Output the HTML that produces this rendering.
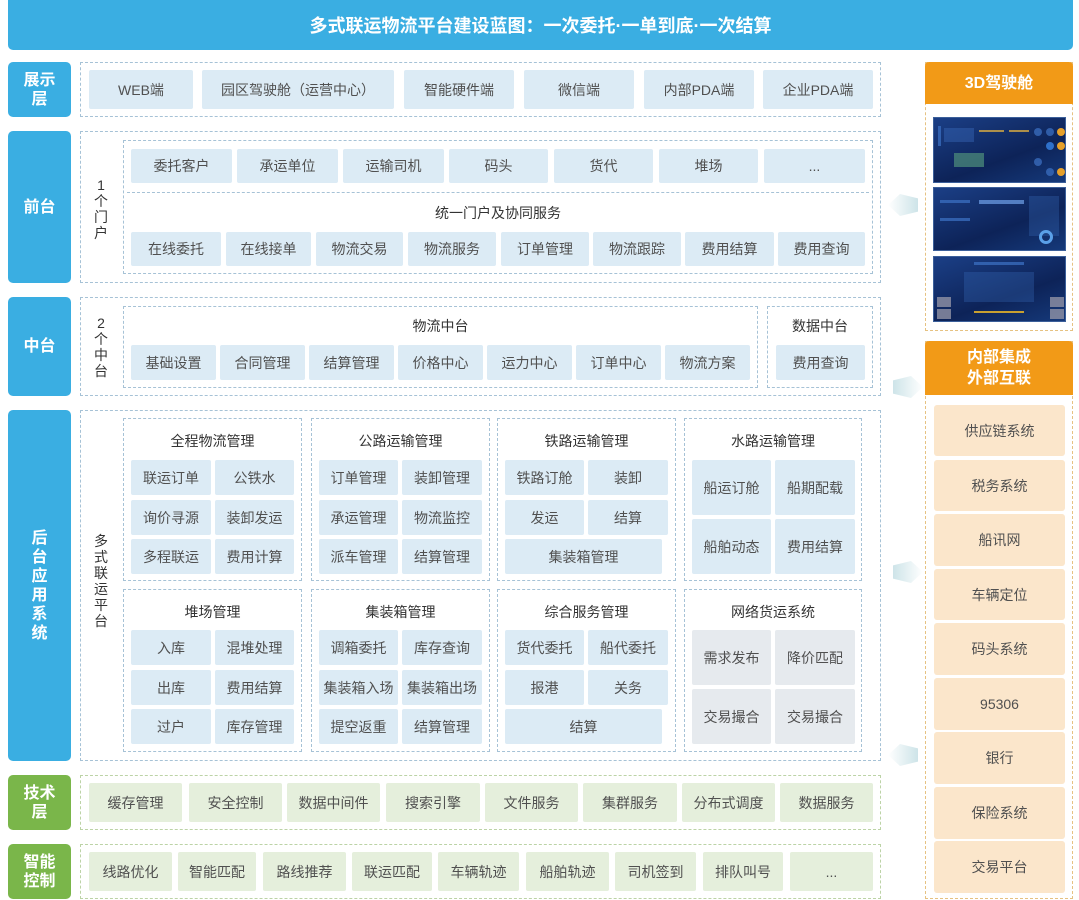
<!DOCTYPE html>
<html><head><meta charset="utf-8"><style>
*{margin:0;padding:0;box-sizing:border-box}
body{width:1079px;height:900px;background:#fff;position:relative;overflow:hidden;font-family:"Liberation Sans","Noto Sans CJK SC",sans-serif;color:#505050;font-size:14px}
.a{position:absolute;display:flex;align-items:center;justify-content:center;text-align:center}
.i{background:#dcebf5;border-radius:2px}
.g{background:#e5efdc;border-radius:2px}
.o{background:#fbe6cb;border-radius:3px}
.y{background:#e6eaee;border-radius:2px}
.L{background:#3aaee2;color:#fff;font-weight:bold;font-size:16px;border-radius:5px;line-height:19px}
.G{background:#7ab64a;color:#fff;font-weight:bold;font-size:16px;border-radius:5px;line-height:19px}
.O{background:#f29a17;color:#fff;font-weight:bold;font-size:16px;border-radius:4px 4px 0 0;line-height:21px}
.d{position:absolute;border:1px dashed #a6c2d6}
.dg{position:absolute;border:1px dashed #bcd3a6}
.do{position:absolute;border:1px dashed #e6c282}
.t{position:absolute;text-align:center;font-size:14px;color:#333}
.v{position:absolute;width:16px;font-size:14px;line-height:16px;text-align:center;color:#333}
.ar{position:absolute;width:30px;height:22px;background:linear-gradient(90deg,rgba(200,225,230,.0),rgba(200,225,230,.9));clip-path:polygon(0 50%,40% 0,100% 20%,100% 80%,40% 100%)}
.ar.r{clip-path:polygon(100% 50%,60% 0,0 20%,0 80%,60% 100%);background:linear-gradient(90deg,rgba(200,225,230,.9),rgba(200,225,230,0))}
.s{position:absolute;left:933px;width:133px;background:linear-gradient(160deg,#1b3f86,#0d2358 60%,#15397a);border:1px solid #3b5f9a;overflow:hidden}
.s i{position:absolute;background:#3b6fc0;opacity:.75}
</style></head><body>
<div class="a" style="left:8px;top:0;width:1065px;height:50px;background:#3aaee2;color:#fff;font-weight:bold;font-size:18px;border-radius:0 0 5px 5px">多式联运物流平台建设蓝图：一次委托·一单到底·一次结算</div>

<div class="a L" style="left:8px;top:62px;width:63px;height:55px">展示<br>层</div>
<div class="a L" style="left:8px;top:131px;width:63px;height:152px">前台</div>
<div class="a L" style="left:8px;top:297px;width:63px;height:99px">中台</div>
<div class="a L" style="left:8px;top:410px;width:63px;height:351px;padding:0 23px;line-height:19px">后台应用系统</div>
<div class="a G" style="left:8px;top:775px;width:63px;height:55px">技术<br>层</div>
<div class="a G" style="left:8px;top:844px;width:63px;height:55px">智能<br>控制</div>

<div class="d" style="left:80px;top:62px;width:801px;height:55px"></div>
<div class="a i" style="left:89px;top:70px;width:104px;height:39px">WEB端</div>
<div class="a i" style="left:202px;top:70px;width:192px;height:39px">园区驾驶舱（运营中心）</div>
<div class="a i" style="left:404px;top:70px;width:110px;height:39px">智能硬件端</div>
<div class="a i" style="left:524px;top:70px;width:110px;height:39px">微信端</div>
<div class="a i" style="left:644px;top:70px;width:110px;height:39px">内部PDA端</div>
<div class="a i" style="left:763px;top:70px;width:110px;height:39px">企业PDA端</div>

<div class="d" style="left:80px;top:131px;width:801px;height:152px"></div>
<div class="v" style="left:93px;top:177px">1个门户</div>
<div class="d" style="left:123px;top:140px;width:750px;height:134px"></div>
<div class="a i" style="left:131px;top:149px;width:101px;height:34px">委托客户</div>
<div class="a i" style="left:237px;top:149px;width:101px;height:34px">承运单位</div>
<div class="a i" style="left:343px;top:149px;width:101px;height:34px">运输司机</div>
<div class="a i" style="left:449px;top:149px;width:99px;height:34px">码头</div>
<div class="a i" style="left:554px;top:149px;width:99px;height:34px">货代</div>
<div class="a i" style="left:659px;top:149px;width:99px;height:34px">堆场</div>
<div class="a i" style="left:764px;top:149px;width:101px;height:34px">...</div>
<div style="position:absolute;left:127px;top:192px;width:742px;border-top:1px dashed #a6c2d6"></div>
<div class="t" style="left:123px;top:203px;width:750px">统一门户及协同服务</div>
<div class="a i" style="left:131px;top:232px;width:90px;height:34px">在线委托</div>
<div class="a i" style="left:226px;top:232px;width:85px;height:34px">在线接单</div>
<div class="a i" style="left:316px;top:232px;width:87px;height:34px">物流交易</div>
<div class="a i" style="left:408px;top:232px;width:88px;height:34px">物流服务</div>
<div class="a i" style="left:501px;top:232px;width:88px;height:34px">订单管理</div>
<div class="a i" style="left:593px;top:232px;width:88px;height:34px">物流跟踪</div>
<div class="a i" style="left:685px;top:232px;width:89px;height:34px">费用结算</div>
<div class="a i" style="left:778px;top:232px;width:87px;height:34px">费用查询</div>

<div class="d" style="left:80px;top:297px;width:801px;height:99px"></div>
<div class="v" style="left:93px;top:315px">2个中台</div>
<div class="d" style="left:123px;top:306px;width:635px;height:82px"></div>
<div class="t" style="left:123px;top:316px;width:635px">物流中台</div>
<div class="a i" style="left:131px;top:345px;width:85px;height:35px">基础设置</div>
<div class="a i" style="left:220px;top:345px;width:85px;height:35px">合同管理</div>
<div class="a i" style="left:309px;top:345px;width:85px;height:35px">结算管理</div>
<div class="a i" style="left:398px;top:345px;width:85px;height:35px">价格中心</div>
<div class="a i" style="left:487px;top:345px;width:85px;height:35px">运力中心</div>
<div class="a i" style="left:576px;top:345px;width:85px;height:35px">订单中心</div>
<div class="a i" style="left:665px;top:345px;width:85px;height:35px">物流方案</div>
<div class="d" style="left:767px;top:306px;width:106px;height:82px"></div>
<div class="t" style="left:767px;top:316px;width:106px">数据中台</div>
<div class="a i" style="left:776px;top:345px;width:89px;height:35px">费用查询</div>

<div class="d" style="left:80px;top:410px;width:801px;height:351px"></div>
<div class="v" style="left:93px;top:533px">多式联运平台</div>

<div class="d" style="left:123px;top:418px;width:179px;height:163px"></div>
<div class="t" style="left:123px;top:431px;width:179px">全程物流管理</div>
<div class="a i" style="left:131px;top:460px;width:80px;height:35px">联运订单</div>
<div class="a i" style="left:215px;top:460px;width:79px;height:35px">公铁水</div>
<div class="a i" style="left:131px;top:500px;width:80px;height:35px">询价寻源</div>
<div class="a i" style="left:215px;top:500px;width:79px;height:35px">装卸发运</div>
<div class="a i" style="left:131px;top:539px;width:80px;height:35px">多程联运</div>
<div class="a i" style="left:215px;top:539px;width:79px;height:35px">费用计算</div>

<div class="d" style="left:311px;top:418px;width:179px;height:163px"></div>
<div class="t" style="left:311px;top:431px;width:179px">公路运输管理</div>
<div class="a i" style="left:319px;top:460px;width:79px;height:35px">订单管理</div>
<div class="a i" style="left:402px;top:460px;width:80px;height:35px">装卸管理</div>
<div class="a i" style="left:319px;top:500px;width:79px;height:35px">承运管理</div>
<div class="a i" style="left:402px;top:500px;width:80px;height:35px">物流监控</div>
<div class="a i" style="left:319px;top:539px;width:79px;height:35px">派车管理</div>
<div class="a i" style="left:402px;top:539px;width:80px;height:35px">结算管理</div>

<div class="d" style="left:497px;top:418px;width:179px;height:163px"></div>
<div class="t" style="left:497px;top:431px;width:179px">铁路运输管理</div>
<div class="a i" style="left:505px;top:460px;width:79px;height:35px">铁路订舱</div>
<div class="a i" style="left:588px;top:460px;width:80px;height:35px">装卸</div>
<div class="a i" style="left:505px;top:500px;width:79px;height:35px">发运</div>
<div class="a i" style="left:588px;top:500px;width:80px;height:35px">结算</div>
<div class="a i" style="left:505px;top:539px;width:157px;height:35px">集装箱管理</div>

<div class="d" style="left:684px;top:418px;width:178px;height:163px"></div>
<div class="t" style="left:684px;top:431px;width:178px">水路运输管理</div>
<div class="a i" style="left:692px;top:460px;width:79px;height:55px">船运订舱</div>
<div class="a i" style="left:775px;top:460px;width:80px;height:55px">船期配载</div>
<div class="a i" style="left:692px;top:519px;width:79px;height:55px">船舶动态</div>
<div class="a i" style="left:775px;top:519px;width:80px;height:55px">费用结算</div>

<div class="d" style="left:123px;top:589px;width:179px;height:163px"></div>
<div class="t" style="left:123px;top:602px;width:179px">堆场管理</div>
<div class="a i" style="left:131px;top:630px;width:80px;height:35px">入库</div>
<div class="a i" style="left:215px;top:630px;width:79px;height:35px">混堆处理</div>
<div class="a i" style="left:131px;top:670px;width:80px;height:35px">出库</div>
<div class="a i" style="left:215px;top:670px;width:79px;height:35px">费用结算</div>
<div class="a i" style="left:131px;top:709px;width:80px;height:35px">过户</div>
<div class="a i" style="left:215px;top:709px;width:79px;height:35px">库存管理</div>

<div class="d" style="left:311px;top:589px;width:179px;height:163px"></div>
<div class="t" style="left:311px;top:602px;width:179px">集装箱管理</div>
<div class="a i" style="left:319px;top:630px;width:79px;height:35px">调箱委托</div>
<div class="a i" style="left:402px;top:630px;width:80px;height:35px">库存查询</div>
<div class="a i" style="left:319px;top:670px;width:79px;height:35px">集装箱入场</div>
<div class="a i" style="left:402px;top:670px;width:80px;height:35px">集装箱出场</div>
<div class="a i" style="left:319px;top:709px;width:79px;height:35px">提空返重</div>
<div class="a i" style="left:402px;top:709px;width:80px;height:35px">结算管理</div>

<div class="d" style="left:497px;top:589px;width:179px;height:163px"></div>
<div class="t" style="left:497px;top:602px;width:179px">综合服务管理</div>
<div class="a i" style="left:505px;top:630px;width:79px;height:35px">货代委托</div>
<div class="a i" style="left:588px;top:630px;width:80px;height:35px">船代委托</div>
<div class="a i" style="left:505px;top:670px;width:79px;height:35px">报港</div>
<div class="a i" style="left:588px;top:670px;width:80px;height:35px">关务</div>
<div class="a i" style="left:505px;top:709px;width:157px;height:35px">结算</div>

<div class="d" style="left:684px;top:589px;width:178px;height:163px"></div>
<div class="t" style="left:684px;top:602px;width:178px">网络货运系统</div>
<div class="a y" style="left:692px;top:630px;width:79px;height:55px">需求发布</div>
<div class="a y" style="left:775px;top:630px;width:80px;height:55px">降价匹配</div>
<div class="a y" style="left:692px;top:689px;width:79px;height:55px">交易撮合</div>
<div class="a y" style="left:775px;top:689px;width:80px;height:55px">交易撮合</div>

<div class="dg" style="left:80px;top:775px;width:801px;height:55px"></div>
<div class="a g" style="left:89px;top:783px;width:93px;height:39px">缓存管理</div>
<div class="a g" style="left:189px;top:783px;width:93px;height:39px">安全控制</div>
<div class="a g" style="left:287px;top:783px;width:93px;height:39px">数据中间件</div>
<div class="a g" style="left:386px;top:783px;width:94px;height:39px">搜索引擎</div>
<div class="a g" style="left:485px;top:783px;width:93px;height:39px">文件服务</div>
<div class="a g" style="left:583px;top:783px;width:94px;height:39px">集群服务</div>
<div class="a g" style="left:682px;top:783px;width:93px;height:39px">分布式调度</div>
<div class="a g" style="left:780px;top:783px;width:93px;height:39px">数据服务</div>

<div class="dg" style="left:80px;top:844px;width:801px;height:55px"></div>
<div class="a g" style="left:89px;top:852px;width:83px;height:39px">线路优化</div>
<div class="a g" style="left:178px;top:852px;width:78px;height:39px">智能匹配</div>
<div class="a g" style="left:263px;top:852px;width:83px;height:39px">路线推荐</div>
<div class="a g" style="left:352px;top:852px;width:80px;height:39px">联运匹配</div>
<div class="a g" style="left:438px;top:852px;width:81px;height:39px">车辆轨迹</div>
<div class="a g" style="left:526px;top:852px;width:83px;height:39px">船舶轨迹</div>
<div class="a g" style="left:615px;top:852px;width:81px;height:39px">司机签到</div>
<div class="a g" style="left:703px;top:852px;width:80px;height:39px">排队叫号</div>
<div class="a g" style="left:790px;top:852px;width:83px;height:39px">...</div>

<div class="ar" style="left:888px;top:194px"></div>
<div class="ar r" style="left:893px;top:376px"></div>
<div class="ar r" style="left:893px;top:561px"></div>
<div class="ar" style="left:888px;top:744px"></div>

<div class="do" style="left:925px;top:62px;width:148px;height:269px"></div>
<div class="a O" style="left:925px;top:62px;width:148px;height:42px">3D驾驶舱</div>
<div class="s" style="top:117px;height:66px">
<i style="left:4px;top:8px;width:3px;height:20px"></i><i style="left:10px;top:10px;width:30px;height:14px;opacity:.4"></i>
<i style="left:45px;top:12px;width:25px;height:2px;background:#e0b040"></i><i style="left:75px;top:12px;width:20px;height:2px;background:#e0b040"></i>
<i style="left:20px;top:35px;width:30px;height:14px;background:#4b8a7a"></i>
<i style="left:100px;top:10px;width:8px;height:8px;border-radius:50%"></i><i style="left:112px;top:10px;width:8px;height:8px;border-radius:50%"></i><i style="left:123px;top:10px;width:8px;height:8px;border-radius:50%;background:#e6a02a;opacity:1"></i>
<i style="left:112px;top:24px;width:8px;height:8px;border-radius:50%;background:#3a8af0"></i><i style="left:123px;top:24px;width:8px;height:8px;border-radius:50%;background:#e6a02a;opacity:1"></i>
<i style="left:100px;top:40px;width:8px;height:8px;border-radius:50%"></i><i style="left:112px;top:50px;width:8px;height:8px;border-radius:50%"></i><i style="left:123px;top:50px;width:8px;height:8px;border-radius:50%;background:#e6a02a;opacity:1"></i>
</div>
<div class="s" style="top:187px;height:64px">
<i style="left:6px;top:12px;width:30px;height:3px"></i><i style="left:45px;top:12px;width:45px;height:4px;background:#6a9ae0"></i>
<i style="left:6px;top:30px;width:30px;height:3px"></i><i style="left:95px;top:8px;width:30px;height:40px;opacity:.3"></i>
<i style="left:105px;top:42px;width:14px;height:14px;border-radius:50%;background:none;border:3px solid #5aa0e8;opacity:1"></i>
</div>
<div class="s" style="top:256px;height:66px">
<i style="left:40px;top:5px;width:50px;height:3px"></i><i style="left:30px;top:15px;width:70px;height:30px;opacity:.3"></i>
<i style="left:40px;top:54px;width:50px;height:2px;background:#c8a030;opacity:1"></i>
<i style="left:3px;top:40px;width:14px;height:10px;background:#99a"></i><i style="left:3px;top:52px;width:14px;height:10px;background:#99a"></i>
<i style="left:116px;top:40px;width:14px;height:10px;background:#99a"></i><i style="left:116px;top:52px;width:14px;height:10px;background:#99a"></i>
</div>

<div class="do" style="left:925px;top:341px;width:148px;height:558px"></div>
<div class="a O" style="left:925px;top:341px;width:148px;height:54px">内部集成<br>外部互联</div>
<div class="a o" style="left:934px;top:405px;width:131px;height:51px">供应链系统</div>
<div class="a o" style="left:934px;top:460px;width:131px;height:51px">税务系统</div>
<div class="a o" style="left:934px;top:514px;width:131px;height:52px">船讯网</div>
<div class="a o" style="left:934px;top:569px;width:131px;height:51px">车辆定位</div>
<div class="a o" style="left:934px;top:623px;width:131px;height:52px">码头系统</div>
<div class="a o" style="left:934px;top:678px;width:131px;height:52px">95306</div>
<div class="a o" style="left:934px;top:732px;width:131px;height:52px">银行</div>
<div class="a o" style="left:934px;top:787px;width:131px;height:52px">保险系统</div>
<div class="a o" style="left:934px;top:841px;width:131px;height:52px">交易平台</div>
</body></html>
